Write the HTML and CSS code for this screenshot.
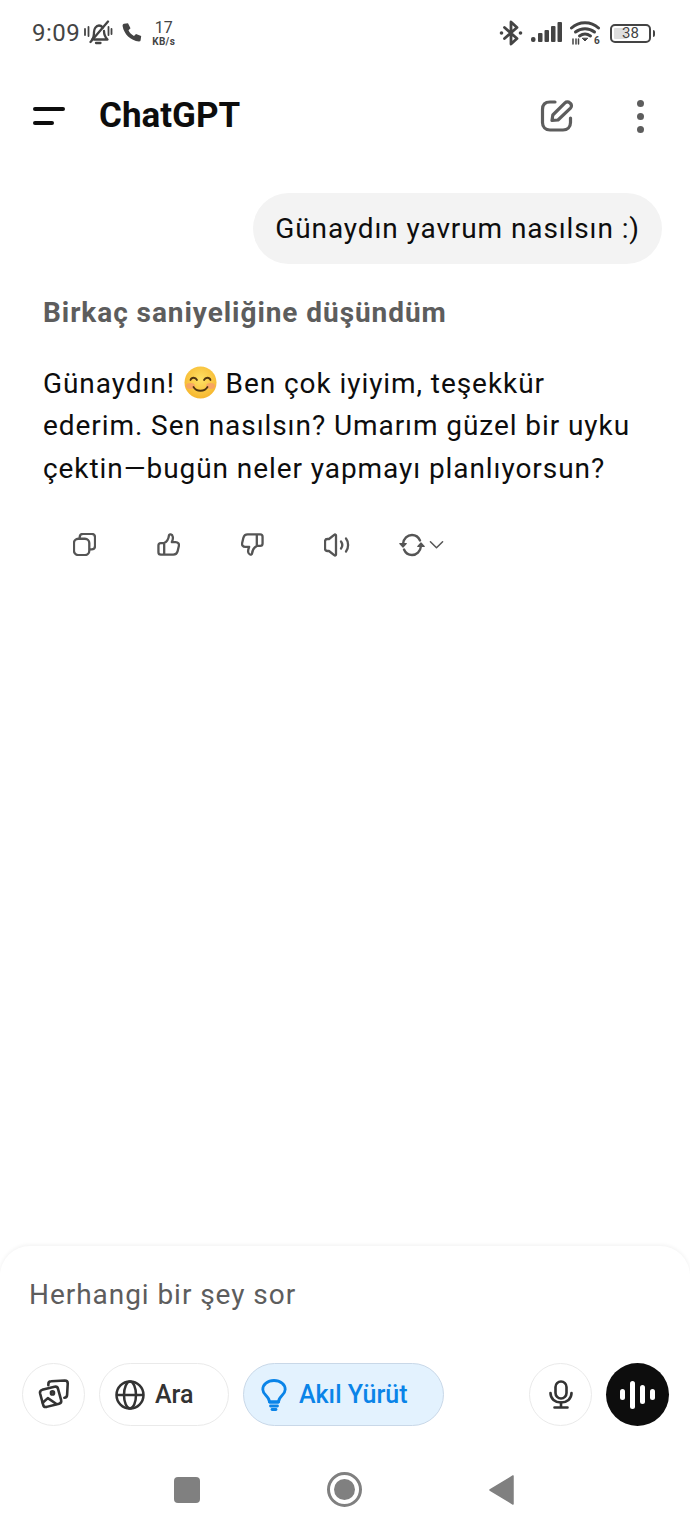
FILE: index.html
```html
<!DOCTYPE html>
<html lang="tr">
<head>
    <meta charset="UTF-8">
    <meta name="viewport" content="width=device-width, initial-scale=1.0">
    <title>ChatGPT</title>
    <link rel="stylesheet" href="styles.css">
</head>
<body>
    <div class="app">
        <div class="status-bar">
            <div class="status-left">
                <span class="clock">9:09</span>
                <svg class="ic-bell" width="29" height="26" viewBox="0 0 29 26" fill="none" stroke="#444" stroke-width="2.300" stroke-linecap="round" stroke-linejoin="round">
                    <path d="M1 9v6M4.500 7v9M27.500 9v5M24.500 7v8" stroke-width="1.800"/>
                    <path d="M8 19.500c2-2 2-4.500 2-7.500 0-3 2-6.500 5-6.500 2 0 3 1 4 2M20 11c0 3 1 6 3.500 8.500H10"/>
                    <path d="M12 23h4.500"/>
                    <path d="M6.500 22L24 1.500"/>
                </svg>
                <svg class="ic-phone" width="20" height="20" viewBox="0 0 20 20"><path fill="#444" d="M2 .8l4-.5 2.500 5-2 2c1 2.400 2.900 4.400 5.500 5.700l2-2 5.200 2-.6 4.200c-.2.800-.8 1.300-1.600 1.200C8.500 17.800 1.800 10.800.6 3c-.1-1 .5-1.900 1.400-2.200z"/></svg>
                <div class="speed"><span class="speed-num">17</span><span class="speed-unit">KB/s</span></div>
            </div>
            <div class="status-right">
                <svg width="24" height="26" viewBox="0 0 24 26" fill="none" stroke="#444" stroke-width="2.800" stroke-linejoin="round" stroke-linecap="round">
                    <path d="M5.500 7.500l12.500 11-6 5.500V2l6 5.500-12.500 11"/>
                    <circle cx="2.500" cy="13" r="1.800" fill="#444" stroke="none"/>
                    <circle cx="21.500" cy="13" r="1.800" fill="#444" stroke="none"/>
                </svg>
                <svg class="ic-signal" width="31" height="20" viewBox="0 0 31 20" fill="#444">
                    <rect x="0" y="15" width="4.500" height="5" rx="2"/>
                    <rect x="7" y="11" width="4.500" height="9" rx="1"/>
                    <rect x="13.500" y="8" width="4.500" height="12" rx="1"/>
                    <rect x="20" y="4" width="4.500" height="16" rx="1"/>
                    <rect x="26.500" y="0" width="4.500" height="20" rx="1"/>
                </svg>
                <svg class="ic-wifi" width="31" height="26" viewBox="0 0 31 26" fill="none" stroke="#444" stroke-width="3" stroke-linecap="round">
                    <path d="M1.500 8C9 1 21 1 28.500 8"/>
                    <path d="M5.500 12c5.500-4.500 13.500-4.500 19 0"/>
                    <path d="M9.500 16c3.500-2.500 7.500-2.500 11 0"/>
                    <path d="M12.500 18.500l2.500 2.500 2.500-2.500z" fill="#444" stroke-width="1"/>
                    <path d="M3 19v5M6 19v5M8.500 19v5" stroke-width="1.500"/>
                    <text x="24" y="24" font-size="10" font-weight="700" fill="#444" stroke="none" font-family="Roboto, sans-serif">6</text>
                </svg>
                <div class="battery">
                    <div class="battery-body">
                        <span class="battery-fill"></span>
                        <span class="battery-num">38</span>
                    </div>
                    <span class="battery-cap"></span>
                </div>
            </div>
        </div>

        <div class="topbar">
            <div class="menu-icon">
                <span class="line-long"></span>
                <span class="line-short"></span>
            </div>
            <div class="title">ChatGPT</div>
            <svg class="ic-edit" width="34" height="34" viewBox="0 0 34 34" fill="none" stroke="#5d5d5d" stroke-width="3.200" stroke-linecap="round" stroke-linejoin="round">
                <path d="M15 3H10C5.500 3 2.500 5.500 2.500 10.500v13c0 4.500 3 7.500 7.500 7.500h13c4.500 0 7.500-3 7.500-7.500V19"/>
                <path d="M12 21.500l.8-5.500L25 3.800c1.300-1.300 3.500-1.300 4.800 0l.7.700c1.300 1.300 1.300 3.300 0 4.600L18 21l-6 .5z"/>
            </svg>
            <div class="dots"><span></span><span></span><span></span></div>
        </div>

        <div class="chat">
            <div class="user-row">
                <div class="bubble">Günaydın yavrum nasılsın :)</div>
            </div>
            <div class="thought">Birkaç saniyeliğine düşündüm</div>
            <p class="answer">Günaydın! <svg class="emoji" width="33" height="33" viewBox="0 0 33 33">
                    <defs>
                        <radialGradient id="face" cx="50%" cy="40%" r="62%">
                            <stop offset="0" stop-color="#fee165"/>
                            <stop offset="1" stop-color="#f6b52c"/>
                        </radialGradient>
                    </defs>
                    <circle cx="16.500" cy="16.500" r="16" fill="url(#face)"/>
                    <ellipse cx="6.500" cy="20" rx="4.500" ry="3" fill="#f7976f" opacity=".7"/>
                    <ellipse cx="26.500" cy="20" rx="4.500" ry="3" fill="#f7976f" opacity=".7"/>
                    <path d="M6.500 14c1-3 5-3 6.500 0M20 14c1.500-3 5.500-3 6.500 0" fill="none" stroke="#4f3410" stroke-width="1.800" stroke-linecap="round"/>
                    <path d="M9.500 21c3 5 11 5 14 0" fill="none" stroke="#4f3410" stroke-width="1.800" stroke-linecap="round"/>
                </svg> Ben çok iyiyim, teşekkür<br>ederim. Sen nasılsın? Umarım güzel bir uyku<br>çektin—bugün neler yapmayı planlıyorsun?</p>
            <div class="actions">
                <svg width="23" height="23" viewBox="0 0 24 24" fill="none" stroke="#555" stroke-width="2.400" stroke-linejoin="round">
                    <rect x="1" y="6" width="16" height="17" rx="4.500"/>
                    <path d="M7 6V4.500C7 2.500 8.500 1 10.500 1h9C21.500 1 23 2.500 23 4.500v9c0 2-1.500 3.500-3.500 3.500H17"/>
                </svg>
                <svg width="23" height="23" viewBox="0 0 24 24" fill="none" stroke="#555" stroke-width="2.400" stroke-linejoin="round" stroke-linecap="round">
                    <path d="M7.500 22.500H4c-1.500 0-2.500-1-2.500-2.500v-7c0-1.500 1-2.500 2.500-2.500h3.500zM7.500 10.500c3-1.500 4.500-4 5-8 .2-1.500 3.500-1.500 4 1.500.3 2-.3 4-1 5.500h4c2.500 0 3.800 1.800 3.300 4l-1.300 5.500c-.6 2.500-2.300 3.500-4.500 3.500H7.500"/>
                </svg>
                <svg width="23" height="23" viewBox="0 0 24 24" fill="none" stroke="#555" stroke-width="2.400" stroke-linejoin="round" stroke-linecap="round">
                    <path d="M16.500 1.500H20c1.500 0 2.500 1 2.500 2.500v7c0 1.500-1 2.500-2.500 2.500h-3.500zM16.500 13.500c-3 1.500-4.500 4-5 8-.2 1.500-3.500 1.500-4-1.500-.3-2 .3-4 1-5.500h-4C2 14.500.7 12.700 1.200 10.500L2.500 5C3.100 2.500 4.800 1.500 7 1.500h9.500"/>
                </svg>
                <svg class="ic-speaker" width="27" height="24" viewBox="0 0 27 24" fill="none" stroke="#555" stroke-width="2.300" stroke-linejoin="round" stroke-linecap="round">
                    <path d="M12 2.500v19c0 1-1 1.300-1.800.7L5 18H3.500C2 18 1 17 1 15.500v-7C1 7 2 6 3.500 6H5l5.200-4.200c.8-.6 1.800-.3 1.800.7z"/>
                    <path d="M17 8.500c1.500 2 1.500 5 0 7M22 5.500c2.800 3.500 2.800 9.500 0 13"/>
                </svg>
                <div class="regen">
                    <svg width="26" height="24" viewBox="0 0 26 24" fill="none" stroke="#555" stroke-width="2.400" stroke-linecap="round" stroke-linejoin="round">
                        <path d="M4 11C4.500 5.500 8.500 2 13 2c3.500 0 6.500 2 8 5.500"/>
                        <path d="M22 13c-.5 5.500-4.500 9-9 9-3.500 0-6.500-2-8-5.500"/>
                        <path d="M.8 10.500L4 14l3.200-3.500zM18.800 13.500L22 10l3.200 3.500z" fill="#555" stroke-width="1.200"/>
                    </svg>
                    <svg width="15" height="10" viewBox="0 0 16 10" fill="none" stroke="#555" stroke-width="1.600" stroke-linecap="round" stroke-linejoin="round"><path d="M1.500 1.500L8 8l6.500-6.500"/></svg>
                </div>
            </div>
        </div>

        <div class="composer">
            <div class="placeholder">Herhangi bir şey sor</div>
            <div class="tools">
                <div class="round-btn">
                    <svg width="33" height="33" viewBox="0 0 32 32" fill="none" stroke="#333" stroke-width="2.500" stroke-linejoin="round" stroke-linecap="round">
                        <path d="M5 11.500l12-3c1.800-.4 3 .4 3.400 2l3 11c.4 1.700-.4 3-2 3.400l-12 3.100c-1.800.4-3-.4-3.400-2l-3-11c-.4-1.700.4-3 2-3.500z"/>
                        <path d="M11 7V6c0-1.700 1-2.800 2.700-2.800L27 2.500c1.800 0 2.800 1 2.800 2.800l-.6 11c-.1 1.800-1 2.700-2.700 2.800"/>
                        <circle cx="15" cy="14.500" r="1.500"/>
                        <path d="M5.500 24l5-4.500 8 5.500"/>
                    </svg>
                </div>
                <div class="pill">
                    <svg width="30" height="30" viewBox="0 0 30 30" fill="none" stroke="#333" stroke-width="2.500">
                        <circle cx="15" cy="15" r="13.500"/>
                        <ellipse cx="15" cy="15" rx="6" ry="13.500"/>
                        <path d="M1.500 15h27"/>
                    </svg>
                    <span>Ara</span>
                </div>
                <div class="pill pill-active">
                    <svg width="26" height="32" viewBox="0 0 26 32" fill="none" stroke="#0a84e8" stroke-width="2.800" stroke-linecap="round" stroke-linejoin="round">
                        <path d="M8.500 23c0-3-1.500-4.500-3.500-6.500C3 14.500 1.800 13 1.800 10.500 1.800 5.500 6.500 1.500 13 1.500s11.200 4 11.200 9c0 2.500-1.200 4-3.200 6-2 2-3.500 3.500-3.500 6.500z"/>
                        <path d="M8.500 23h9M9.500 27h7"/>
                        <path d="M11 30.500h4"/>
                    </svg>
                    <span>Akıl Yürüt</span>
                </div>
                <div class="spacer"></div>
                <div class="round-btn">
                    <svg width="24" height="29" viewBox="0 0 24 29" fill="none" stroke="#333" stroke-width="2.600" stroke-linecap="round">
                        <rect x="6.500" y="1.500" width="11" height="17" rx="5.500"/>
                        <path d="M1.500 13c0 6 4.500 9.500 10.500 9.500S22.500 19 22.500 13"/>
                        <path d="M12 22.500v4.500M5.500 27.500h13"/>
                    </svg>
                </div>
                <div class="voice-btn">
                    <span class="bar-s"></span>
                    <span class="bar-l"></span>
                    <span class="bar-m"></span>
                    <span class="bar-s"></span>
                </div>
            </div>
            <div class="nav-bar">
                <span class="nav-square"></span>
                <span class="nav-circle"><span></span></span>
                <svg width="25" height="30" viewBox="0 0 25 30"><path fill="#808080" stroke="#808080" stroke-width="1.500" stroke-linejoin="round" d="M24 1v28L1 15z"/></svg>
            </div>
        </div>
    </div>
</body>
</html>
```

FILE: styles.css
```css
* {
    margin: 0;
    padding: 0;
    box-sizing: border-box;
}
body {
    background-color: #fff;
    font-family: Roboto, "Liberation Sans", sans-serif;
    color: #0d0d0d;
}
.app {
    width: 690px;
    height: 1533px;
    display: flex;
    flex-direction: column;
    overflow: hidden;
}
.status-bar {
    height: 66px;
    flex-shrink: 0;
    display: flex;
    justify-content: space-between;
    align-items: center;
    padding: 0 35px 0 32px;
    color: #444;
}
.status-left {
    display: flex;
    align-items: center;
}
.clock {
    font-size: 24px;
    letter-spacing: 0.5px;
}
.ic-bell {
    margin-left: 4px;
}
.ic-phone {
    margin-left: 9px;
}
.speed {
    margin-left: 10px;
    display: flex;
    flex-direction: column;
    align-items: center;
    line-height: 1;
}
.speed-num {
    font-size: 16px;
    line-height: 16px;
}
.speed-unit {
    font-size: 10px;
    font-weight: 700;
    line-height: 11px;
    letter-spacing: 0.3px;
}
.status-right {
    display: flex;
    align-items: center;
}
.ic-signal {
    margin-left: 8px;
    margin-top: -2px;
}
.ic-wifi {
    margin-left: 8px;
}
.battery {
    margin-left: 9px;
    display: flex;
    align-items: center;
}
.battery-body {
    width: 41px;
    height: 19px;
    border: 2px solid #444;
    border-radius: 5px;
    padding: 2px;
    display: flex;
    align-items: center;
    position: relative;
}
.battery-fill {
    width: 13px;
    height: 100%;
    background-color: #dedede;
    border-radius: 1px;
}
.battery-num {
    position: absolute;
    left: 0;
    right: 0;
    text-align: center;
    font-size: 15px;
    line-height: 15px;
    color: #444;
}
.battery-cap {
    width: 2px;
    height: 7px;
    margin-left: 2px;
    background-color: #444;
    border-radius: 0 2px 2px 0;
}
.topbar {
    height: 100px;
    flex-shrink: 0;
    display: flex;
    align-items: center;
    padding: 0 46px 0 33px;
}
.menu-icon {
    width: 32px;
    display: flex;
    flex-direction: column;
    gap: 10px;
}
.menu-icon span {
    display: block;
    height: 4px;
    background-color: #0d0d0d;
    border-radius: 2px;
}
.line-long {
    width: 32px;
}
.line-short {
    width: 21px;
}
.title {
    flex: 1;
    margin-left: 34px;
    font-size: 35px;
    font-weight: 700;
    line-height: 40px;
}
.dots {
    margin-left: 63px;
    display: flex;
    flex-direction: column;
    gap: 6px;
}
.dots span {
    display: block;
    width: 7px;
    height: 7px;
    border-radius: 50%;
    background-color: #5d5d5d;
}
.chat {
    flex: 1;
    padding: 27px 28px 0 43px;
}
.user-row {
    display: flex;
    justify-content: flex-end;
}
.bubble {
    height: 71px;
    padding: 0 22px 0 22px;
    display: flex;
    align-items: center;
    background-color: #f3f3f3;
    border-radius: 36px;
    font-size: 28px;
    letter-spacing: 0.9px;
}
.thought {
    margin-top: 32px;
    font-size: 28px;
    font-weight: 700;
    line-height: 34px;
    letter-spacing: 0.94px;
    color: #5d5d5d;
}
.answer {
    margin-top: 33px;
    font-size: 28px;
    line-height: 42.300px;
    letter-spacing: 0.93px;
}
.emoji {
    vertical-align: -6px;
    margin: 0 1px;
}
.actions {
    margin-top: 43px;
    padding-left: 30px;
    display: flex;
    align-items: center;
    gap: 61px;
}
.ic-speaker {
    margin-left: -1px;
}
.regen {
    margin-left: -13px;
    display: flex;
    align-items: center;
    gap: 4px;
}
.composer {
    height: 287px;
    flex-shrink: 0;
    padding: 32px 21px 0 22px;
    border-radius: 30px 30px 0 0;
    box-shadow: 0 -1px 4px rgba(0, 0, 0, 0.06);
}
.placeholder {
    padding-left: 7px;
    font-size: 28px;
    line-height: 34px;
    letter-spacing: 0.95px;
    color: #5d5d5d;
}
.tools {
    margin-top: 51px;
    display: flex;
    align-items: center;
    gap: 14px;
}
.spacer {
    flex: 1;
}
.round-btn {
    width: 63px;
    height: 63px;
    border: 1.500px solid #eaeaea;
    border-radius: 50%;
    display: flex;
    justify-content: center;
    align-items: center;
}
.pill {
    height: 63px;
    width: 130px;
    padding-left: 15px;
    border: 1.500px solid #eaeaea;
    border-radius: 32px;
    display: flex;
    align-items: center;
    gap: 10px;
    font-size: 25px;
    font-weight: 500;
    color: #333;
}
.pill-active {
    width: 201px;
    padding-left: 17px;
    gap: 12px;
    background-color: #e3f2fe;
    border-color: #c9d8e8;
    color: #0a84e8;
}
.voice-btn {
    width: 63px;
    height: 63px;
    border-radius: 50%;
    background-color: #0d0d0d;
    display: flex;
    justify-content: center;
    align-items: center;
    gap: 5px;
}
.voice-btn span {
    display: block;
    width: 5px;
    background-color: #fff;
    border-radius: 3px;
}
.bar-s {
    height: 11px;
}
.bar-l {
    height: 28px;
}
.bar-m {
    height: 19px;
}
.nav-bar {
    margin-top: 46px;
    padding-left: 152px;
    display: flex;
    align-items: center;
    justify-content: flex-start;
    gap: 127px;
}
.nav-square {
    width: 26px;
    height: 26px;
    background-color: #808080;
    border-radius: 4px;
}
.nav-circle {
    width: 35px;
    height: 35px;
    border: 3.500px solid #808080;
    border-radius: 50%;
    display: flex;
    justify-content: center;
    align-items: center;
}
.nav-circle span {
    display: block;
    width: 21px;
    height: 21px;
    background-color: #808080;
    border-radius: 50%;
}
```
